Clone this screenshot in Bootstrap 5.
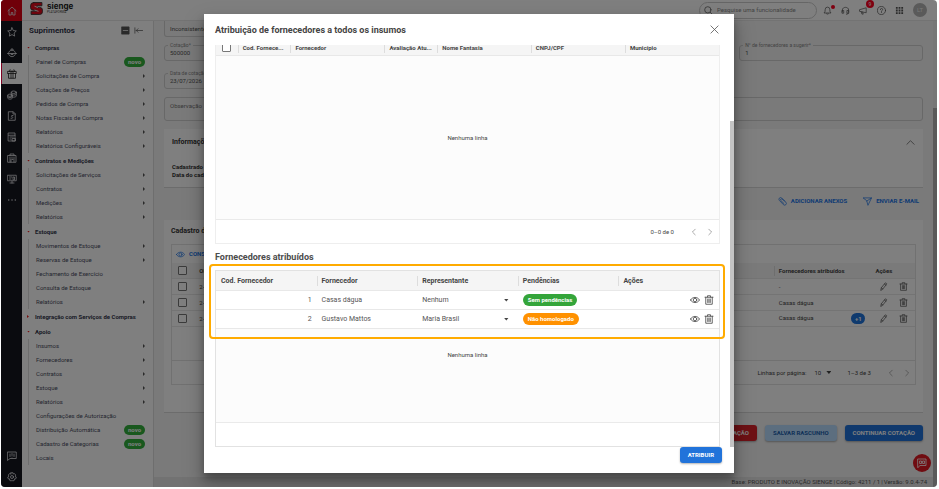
<!DOCTYPE html>
<html lang="pt-BR">
<head>
<meta charset="utf-8">
<meta name="viewport" content="width=device-width, initial-scale=1">
<title>Sienge - Suprimentos</title>
<link href="https://cdn.jsdelivr.net/npm/bootstrap@5.3.0/dist/css/bootstrap.min.css" rel="stylesheet">
<style>
html,body{height:100%}
body{font-family:Roboto,"Liberation Sans",sans-serif;font-size:6px;line-height:10px;color:#333;background:#fff;padding:0 2px 2px 1px;overflow:hidden}
a{color:inherit;text-decoration:none}
svg{display:block;fill:none;stroke:currentColor;stroke-width:1.6;stroke-linecap:round;stroke-linejoin:round;flex:none}
button{font:inherit}
input,select{font:inherit;color:inherit}
.app-frame{border-radius:4px;background:#f4f4f4}
.rail{width:21px;background:#14161f;color:#e4e4e8}
.rail a{height:21px}
.rail svg{width:10px;height:10px}
.rail .rail-home{background:#e00012}
.rail .rail-on{background:#fff;color:#222;border-left:1px solid #f04}
.topbar{height:21px;background:#fff;border-bottom:1px solid #e6e6e6;padding:0 10px 0 8px}
.logo-name{font:bold 8px/8px Inter,"Open Sans",sans-serif;color:#222}
.logo-sub{font-size:3px;line-height:4px;color:#444}
.search-pill{width:118px;height:17px;border:1px solid #ccc;border-radius:9px;color:#555;padding:0 4px;margin-right:6px}
.search-pill input{border:0;background:none;outline:0;padding:0;min-width:0}
.search-pill input::placeholder{color:#888;opacity:1}
.top-icons{gap:7px;color:#555}
.top-icons svg{width:11px;height:11px}
.top-icons button{color:inherit;width:11px}
.dot{top:-1px;right:-1px;width:4px;height:4px;background:#ff0020}
.count{top:-6px;right:-4px;width:8px;height:8px;font-size:5px;line-height:8px;background:#ff0020;color:#fff}
.avatar{width:14px;height:14px;background:#b4b4b4;color:#eee;line-height:14px}
.side{width:132px;background:#fff;border-right:1px solid #ddd;color:#4a4d62}
.side-head{height:19px;padding:0 10px 0 7px;font-size:8px;font-weight:700;color:#34374c}
.side-head svg{width:8px;height:8px}
.side-group{height:15px;padding-left:5px;font-weight:700;gap:5px;color:#34374c}
.caret-d{width:3px;height:2px;background:#f02020;clip-path:polygon(0 0,100% 0,50% 100%)}
.caret-r{width:2px;height:3px;margin-right:1px;background:#f02020;clip-path:polygon(0 0,100% 50%,0 100%)}
.side-list{margin-left:6px;border-left:1px solid #ddd}
.side-list a{height:14px;padding:0 8px 0 7px}
.side-list .more::after{content:"";width:2px;height:4px;background:#555;clip-path:polygon(0 0,100% 50%,0 100%)}
.novo{background:#32b03c;color:#fff;font-weight:700;line-height:10px;width:21px}
.work{padding:0 10px}
.fld{height:16px;border:1px solid #d0d0d0;border-radius:3px}
.fld label{top:-4px;left:3px;padding:0 2px;background:#f4f4f4;font-size:5px;line-height:7px;color:#888}
.fld input{border:0;background:none;outline:0;padding:0 5px;color:#555}
.fld-grid{display:grid;grid-template-columns:repeat(4,1fr);column-gap:8px}
.obs{height:24px;border:1px solid #d0d0d0;border-radius:3px;background:none;padding:3px 5px;resize:none}
.obs::placeholder{color:#777;opacity:1}
.panel{background:#fff;border-bottom:1px solid #d8d8d8;color:#333}
.panel-two{margin-top:14px;padding:6px 7px 27px}
.panel-t{font-size:7px;font-weight:700;line-height:10px}
.meta{line-height:8px;font-weight:700}
.act-link{color:#2176e8;font-weight:700;border:0;background:none;padding:0;gap:4px}
.act-link svg{width:9px;height:9px}
.grid-box{border:1px solid #e2e2e2}
.tb{margin:0;table-layout:fixed;width:100%;border-collapse:separate;border-spacing:0}
.tb th,.tb td{padding:0 5px;white-space:nowrap;overflow:hidden;vertical-align:middle;border-bottom:1px solid #e8e8e8}
.tb th{background:#f5f5f5;font-weight:700;color:#444}
.sep{border-left:1px solid #ddd;padding-left:4px;margin-left:-5px;display:block}
input.tick{appearance:none;width:9px;height:9px;border:1px solid #777;border-radius:1px;margin:0 0 0 1px;display:block;background:#fff}
.tb-back th,.tb-back td{height:16px}
.tb-back td{color:#444}
.tb-back .acts{padding-right:7px}
.tb-back .acts svg{width:9px;height:9px}
.acts-gap{gap:11px}
.icon-b{border:0;background:none;padding:0;color:#555}
.icon-b svg{width:9px;height:9px}
.plus{background:#1f74dc;color:#fff;width:14px;line-height:11px;font-weight:700}
.page-sel{appearance:none;border:0;background:none;padding:0;width:8px}
.tri{width:5px;height:3px;background:#444;clip-path:polygon(0 0,100% 0,50% 100%);flex:none;pointer-events:none}
.page-nav{margin-top:33px;height:24px;border-top:1px solid #e2e2e2;color:#444}
.btn-x{font-weight:700;line-height:10px;padding:3px 8px;border-radius:3px;border:0;box-shadow:0 1px 2px rgba(0,0,0,.3)}
.btn-blue{background:#2173da;color:#fff}
.btn-red{background:#dc222b;color:#fff}
.btn-soft{background:#b8dcff;color:#1b5fae}
.btn-line{margin-top:12px}
.statusbar{height:10px;background:#e4e4e4;padding:0 6px;color:#555;gap:1px}
.fab{right:6px;bottom:15px;width:18px;height:18px;background:#e01822;color:#fff}
.page-scroll{width:4px;background:#eee}
.page-scroll div{background:#b4b4b4;margin-top:87px}
.shade{background:rgba(0,0,0,.5)}
.dlg{width:calc(100% - 28px);max-width:530px;top:14px;bottom:14px;background:#fff;box-shadow:0 5px 7px rgba(0,0,0,.25),0 10px 18px 2px rgba(0,0,0,.25)}
.dlg svg{stroke-width:1.8}
.dlg-head{height:31px;padding:0 15px 0 11px}
.dlg-title{font-size:9px;line-height:12px;font-weight:700;color:#444;margin:0}
.dlg-body{padding:0 14px 0 11px}
.first-grid{margin-top:-6px;border:1px solid #eee}
.tb-one th{height:16px;padding:0 0 0 5px}
.tb-two{font-size:7px}
.tb-two th{height:20px}.tb-two td{height:19px;color:#555}
.tb-two svg{width:10px;height:10px}
.empty{background:#fcfcfc;border-bottom:1px solid #eaeaea;color:#444}
.empty-a{height:164px}.empty-b{flex:1;padding-top:21px}
.foot-row{height:23px;color:#444;padding-right:5px}
.foot-row svg,.page-nav svg{width:8px;height:8px;color:#888}
.sub-title{font-size:9px;line-height:12px;font-weight:700;color:#4c4c4c;margin:7px 0}
.rep{appearance:none;border:0;background:none;padding:0;outline:0}
.tag{display:inline-block;font-size:6px;color:#fff;font-weight:700;line-height:12px;padding:0 5px;border-radius:6px}
.tag-ok{background:#34a53a}.tag-warn{background:#ff9100}
.marker{left:-7px;right:-6px;top:-7px;bottom:-10px;border:2px solid #ffab00;border-radius:4px;pointer-events:none}
.dlg-scroll{right:0;top:76px;bottom:0;width:4px;background:#c4c4c4}
.dlg-foot{height:26px;padding:0 12px 0 0}
</style>
<script src="https://cdn.jsdelivr.net/npm/bootstrap@5.3.0/dist/js/bootstrap.bundle.min.js"></script>
</head>
<body>
<svg width="0" height="0" class="position-absolute">
<defs>
<symbol id="i-pen" viewBox="0 0 20 20"><path d="M4 18l1-5L13.500 2.500q1-1 2.500 0t.8 2.500L8.500 15.500zM12 4.500l3.500 2.500M5 13l3.500 2.500"/></symbol>
<symbol id="i-bin" viewBox="0 0 20 20"><path d="M2 4.500h16M7 4V1.500h6V4M3.500 4.500v14h13v-14M7.500 8v7M10 8v7M12.500 8v7"/></symbol>
<symbol id="i-eye" viewBox="0 0 20 20"><path d="M1 10c4-7 14-7 18 0-4 7-14 7-18 0z"/><circle cx="10" cy="10" r="3.500"/></symbol>
<symbol id="i-prev" viewBox="0 0 20 20"><path d="M13 3l-7 7 7 7"/></symbol>
<symbol id="i-next" viewBox="0 0 20 20"><path d="M7 3l7 7-7 7"/></symbol>
</defs>
</svg>
<div class="app-frame position-relative overflow-hidden d-flex h-100">
  <nav class="rail d-flex flex-column flex-shrink-0" aria-label="Módulos">
    <a href="#" class="rail-home d-flex align-items-center justify-content-center" aria-label="Início"><svg viewBox="0 0 20 20"><path d="M2 9.500L10 2l8 7.500M4 8v10h4.500v-5h3v5H16V8"/></svg></a>
    <a href="#" class="d-flex align-items-center justify-content-center" aria-label="Favoritos"><svg viewBox="0 0 20 20"><path d="M10 1.500l2.600 5.600 6 .8-4.400 4.200 1.100 6.100L10 15.200l-5.300 3 1.100-6.100L1.400 7.900l6-.8z"/></svg></a>
    <a href="#" class="d-flex align-items-center justify-content-center" aria-label="Engenharia"><svg viewBox="0 0 20 20"><path d="M1 11h18M3 11c0-9 14-9 14 0M3.500 13c2 6 11 6 13 0M8 4V2h4v2M8 11v2h4v-2"/></svg></a>
    <a href="#" class="rail-on d-flex align-items-center justify-content-center" aria-label="Suprimentos"><svg viewBox="0 0 20 20"><path d="M1.500 5h17v4h-17zM3 9v9.500h14V9M8 5v13M12 5v13M10 5C7 0 3 1 5 5M10 5c3-5 7-4 5 0"/></svg></a>
    <a href="#" class="d-flex align-items-center justify-content-center" aria-label="Financeiro"><svg viewBox="0 0 20 20"><ellipse cx="13.500" cy="4.500" rx="5" ry="2.500"/><path d="M8.500 4.500v8c2 2.500 8 2.500 10 0v-8M8.500 8.500c2 2.500 8 2.500 10 0"/><ellipse cx="6" cy="10.500" rx="4.500" ry="2.300"/><path d="M1.500 10.500v6c2 2.500 7 2.500 9 0v-6M1.500 13.500c2 2.500 7 2.500 9 0"/></svg></a>
    <a href="#" class="d-flex align-items-center justify-content-center" aria-label="Contabilidade"><svg viewBox="0 0 20 20"><path d="M3.500 1.500h9l4 4v13h-13zM12 2v4h4M12 9H9.500q-2 1.500 0 2.500h1q2 1 0 3H8"/></svg></a>
    <a href="#" class="d-flex align-items-center justify-content-center" aria-label="Fiscal"><svg viewBox="0 0 20 20"><path d="M3 2h13v16H3zM3 6.500h13M6 10h7M6 14h2M11 13h6v5h-6z"/></svg></a>
    <a href="#" class="d-flex align-items-center justify-content-center" aria-label="Patrimônio"><svg viewBox="0 0 20 20"><path d="M2 5h16v13.500H2zM6 5V2h8v3M6 8v10M14 8v10M10 8v3l-2 2v5M10 13h2"/></svg></a>
    <a href="#" class="d-flex align-items-center justify-content-center" aria-label="Comercial"><svg viewBox="0 0 20 20"><path d="M1.500 2.500h17v11h-17zM6 18h8M10 14v4M5 6h5M5 10h3M12 11V6h3v5z"/></svg></a>
    <a href="#" class="d-flex align-items-center justify-content-center" aria-label="Mais"><svg viewBox="0 0 20 20"><path d="M3.500 10h.1M10 10h.1M16.500 10h.1" stroke-width="2.600"/></svg></a>
    <a href="#" class="mt-auto d-flex align-items-center justify-content-center" aria-label="Comentários"><svg viewBox="0 0 20 20"><path d="M1.500 2h17v13H6l-4.500 3.500zM10 5v4M10 12v.1M6 6v5M14 6v5"/></svg></a>
    <a href="#" class="d-flex align-items-center justify-content-center" aria-label="Configurações"><svg viewBox="0 0 20 20"><circle cx="10" cy="10" r="3"/><path d="M8 1.500h4l.6 2.500 2.400-.8 2.500 3-1.500 2 2.500 1.800-1 3.600-2.600.2v2.600l-3.400 1.700L10 16.500l-1.500 1.600L5.100 16.400v-2.600l-2.600-.2-1-3.600L4 8.200 2.500 6.200l2.500-3 2.400.8z"/></svg></a>
  </nav>
  <div class="flex-fill d-flex flex-column overflow-hidden">
    <header class="topbar d-flex align-items-center flex-shrink-0">
      <a href="#" class="d-flex align-items-center me-auto pb-1" aria-label="sienge">
        <svg width="13" height="13" viewBox="0 0 24 24" fill="#e00a1c" stroke="none"><path fill="#e00a1c" d="M7 1h15v6h-9v3h5q5 0 5 5v3q0 5-5 5H2v-6h10v-2H6q-5 0-5-5V7q0-6 6-6z"/><path stroke="#fff" stroke-width="1.500" d="M9 8l5 2M9 15l6 2"/></svg>
        <span class="ps-1 ms-n1"><span class="logo-name d-block">sienge</span><span class="logo-sub d-block">PLATAFORMA</span></span>
      </a>
      <div class="search-pill d-flex align-items-center gap-1">
        <svg width="9" height="9" viewBox="0 0 20 20"><circle cx="8.500" cy="8.500" r="7"/><path d="M14 14l5 5"/></svg>
        <input class="flex-fill" type="search" aria-label="Pesquisar" placeholder="Pesquise uma funcionalidade">
      </div>
      <div class="top-icons d-flex align-items-center">
        <button class="icon-b position-relative" aria-label="Notificações"><svg viewBox="0 0 20 20"><path d="M3 15q2-1.500 2-7.500 0-5 5-5t5 5q0 6 2 7.500zM8 17.500q2 1.500 4 0"/></svg><span class="dot position-absolute rounded-circle"></span></button>
        <button class="icon-b" aria-label="Suporte"><svg viewBox="0 0 20 20"><path d="M3 13V9c0-8 14-8 14 0v4M3 10h3v6H3zM14 10h3v6h-3zM17 16q-1 2.500-5 2.500"/></svg></button>
        <button class="icon-b position-relative" aria-label="Novidades"><svg viewBox="0 0 20 20"><path d="M2 8l14-4v11L2 12zM5 13l1.500 5h3L8 13.500"/></svg><span class="count position-absolute rounded-circle text-center">9</span></button>
        <button class="icon-b" aria-label="Ajuda"><svg viewBox="0 0 20 20"><circle cx="10" cy="10" r="9"/><path d="M7.500 8q0-2.500 2.500-2.500T12.500 8q0 1.500-2.500 3v1M10 14.500v.2"/></svg></button>
        <button class="icon-b" aria-label="Aplicativos"><svg viewBox="0 0 20 20"><path stroke="none" fill="currentColor" d="M2 2h4v4H2zM8 2h4v4H8zM14 2h4v4h-4zM2 8h4v4H2zM8 8h4v4H8zM14 8h4v4h-4zM2 14h4v4H2zM8 14h4v4H8zM14 14h4v4h-4z"/></svg></button>
        <span class="avatar rounded-circle text-center">LT</span>
      </div>
    </header>
    <div class="flex-fill d-flex overflow-hidden">
      <aside class="side flex-shrink-0">
        <div class="side-head d-flex align-items-center"><span class="me-auto">Suprimentos</span>
          <button class="icon-b me-1" aria-label="Recolher grupos"><svg viewBox="0 0 20 20"><path fill="#555" stroke="#555" d="M2 2h16v16H2z"/><path stroke="#fff" d="M5 10h10"/></svg></button>
          <button class="icon-b" aria-label="Ocultar menu"><svg viewBox="0 0 20 20"><path d="M2 4v12M19 10H5M9 6l-4 4 4 4"/></svg></button></div>
        <a href="#" class="side-group d-flex align-items-center"><i class="caret-d"></i>Compras</a>
        <div class="side-list">
          <a href="#" class="d-flex align-items-center justify-content-between">Painel de Compras<span class="novo rounded-pill text-center">novo</span></a>
          <a href="#" class="more d-flex align-items-center justify-content-between">Solicitações de Compra</a>
          <a href="#" class="more d-flex align-items-center justify-content-between">Cotações de Preços</a>
          <a href="#" class="more d-flex align-items-center justify-content-between">Pedidos de Compra</a>
          <a href="#" class="more d-flex align-items-center justify-content-between">Notas Fiscais de Compra</a>
          <a href="#" class="more d-flex align-items-center justify-content-between">Relatórios</a>
          <a href="#" class="more d-flex align-items-center justify-content-between">Relatórios Configuráveis</a>
        </div>
        <a href="#" class="side-group d-flex align-items-center"><i class="caret-d"></i>Contratos e Medições</a>
        <div class="side-list">
          <a href="#" class="more d-flex align-items-center justify-content-between">Solicitações de Serviços</a>
          <a href="#" class="more d-flex align-items-center justify-content-between">Contratos</a>
          <a href="#" class="more d-flex align-items-center justify-content-between">Medições</a>
          <a href="#" class="more d-flex align-items-center justify-content-between">Relatórios</a>
        </div>
        <a href="#" class="side-group d-flex align-items-center"><i class="caret-d"></i>Estoque</a>
        <div class="side-list">
          <a href="#" class="more d-flex align-items-center justify-content-between">Movimentos de Estoque</a>
          <a href="#" class="more d-flex align-items-center justify-content-between">Reservas de Estoque</a>
          <a href="#" class="d-flex align-items-center">Fechamento de Exercício</a>
          <a href="#" class="d-flex align-items-center">Consulta de Estoque</a>
          <a href="#" class="more d-flex align-items-center justify-content-between">Relatórios</a>
        </div>
        <a href="#" class="side-group d-flex align-items-center"><i class="caret-r"></i>Integração com Serviços de Compras</a>
        <a href="#" class="side-group d-flex align-items-center"><i class="caret-d"></i>Apoio</a>
        <div class="side-list">
          <a href="#" class="more d-flex align-items-center justify-content-between">Insumos</a>
          <a href="#" class="more d-flex align-items-center justify-content-between">Fornecedores</a>
          <a href="#" class="more d-flex align-items-center justify-content-between">Contratos</a>
          <a href="#" class="more d-flex align-items-center justify-content-between">Estoque</a>
          <a href="#" class="more d-flex align-items-center justify-content-between">Relatórios</a>
          <a href="#" class="d-flex align-items-center">Configurações de Autorização</a>
          <a href="#" class="d-flex align-items-center justify-content-between">Distribuição Automática<span class="novo rounded-pill text-center">novo</span></a>
          <a href="#" class="d-flex align-items-center justify-content-between">Cadastro de Categorias<span class="novo rounded-pill text-center">novo</span></a>
          <a href="#" class="d-flex align-items-center">Locais</a>
        </div>
      </aside>
      <main class="flex-fill d-flex flex-column overflow-hidden">
        <div class="work flex-fill">
          <div class="fld-grid"><div class="fld border-top-0 rounded-top-0 d-flex"><input class="w-100" aria-label="Situação da cotação" value="Inconsistente"></div></div>
          <div class="fld-grid pt-2">
            <div class="fld position-relative d-flex"><label class="position-absolute" for="cot">Cotação*</label><input id="cot" class="w-100" value="500000"></div>
            <span></span><span></span>
            <div class="fld position-relative d-flex"><label class="position-absolute" for="sug">N° de fornecedores a sugerir*</label><input id="sug" class="w-100" value="1"></div>
          </div>
          <div class="fld-grid pt-2 mt-1">
            <div class="fld position-relative d-flex"><label class="position-absolute" for="dat">Data de cotação*</label><input id="dat" class="w-100" value="23/07/2026"></div>
          </div>
          <textarea class="obs d-block w-100 mt-2" aria-label="Observação" placeholder="Observação"></textarea>
          <section class="panel px-2 pt-2 pb-2 mt-2">
            <div class="panel-t d-flex justify-content-between">Informações de cadastro<button class="icon-b" aria-label="Recolher"><svg viewBox="0 0 20 20"><path d="M2 14l8-8 8 8"/></svg></button></div>
            <div class="meta pt-3">Cadastrado por</div><div class="meta">Data do cadastro</div>
          </section>
          <div class="d-flex justify-content-end gap-3 mt-2 pe-1">
            <button class="act-link d-flex align-items-center"><svg viewBox="0 0 20 20"><path d="M15 9L8 2q-3-2-5 .5t0 5L12 17q3 2.500 5.500 0t0-5.500L9 4.500q-2-1-3 .3t0 2.700l7 7"/></svg>ADICIONAR ANEXOS</button>
            <button class="act-link d-flex align-items-center"><svg viewBox="0 0 20 20"><path d="M1 2h18L11 18.500 8.500 9zM8.500 9L19 2"/></svg>ENVIAR E-MAIL</button>
          </div>
          <section class="panel panel-two">
            <div class="panel-t pb-2">Cadastro de insumos</div>
            <div class="grid-box">
              <div class="d-flex align-items-center px-1 py-1"><button class="act-link d-flex align-items-center"><svg viewBox="0 0 20 20"><use href="#i-eye"/></svg>CONSULTAR</button></div>
              <table class="tb tb-back">
                <colgroup><col style="width:3%"><col style="width:78%"><col style="width:13%"><col style="width:6%"></colgroup>
                <thead><tr><th><input type="checkbox" class="tick" aria-label="Selecionar todos"></th><th>Obra</th><th><span class="sep">Fornecedores atribuídos</span></th><th>Ações</th></tr></thead>
                <tbody>
                <tr><td><input type="checkbox" class="tick" aria-label="Linha 1"></td><td>2-1</td><td>-</td><td class="acts"><div class="acts-gap d-flex justify-content-end"><button class="icon-b" aria-label="Editar"><svg><use href="#i-pen"/></svg></button><button class="icon-b" aria-label="Excluir"><svg><use href="#i-bin"/></svg></button></div></td></tr>
                <tr><td><input type="checkbox" class="tick" aria-label="Linha 2"></td><td>2-2</td><td>Casas dágua</td><td class="acts"><div class="acts-gap d-flex justify-content-end"><button class="icon-b" aria-label="Editar"><svg><use href="#i-pen"/></svg></button><button class="icon-b" aria-label="Excluir"><svg><use href="#i-bin"/></svg></button></div></td></tr>
                <tr><td><input type="checkbox" class="tick" aria-label="Linha 3"></td><td>2-3</td><td><div class="d-flex justify-content-between">Casas dágua<span class="plus rounded-pill text-center">+1</span></div></td><td class="acts"><div class="acts-gap d-flex justify-content-end"><button class="icon-b" aria-label="Editar"><svg><use href="#i-pen"/></svg></button><button class="icon-b" aria-label="Excluir"><svg><use href="#i-bin"/></svg></button></div></td></tr>
                </tbody>
              </table>
              <div class="page-nav d-flex align-items-center justify-content-end pe-1">
                <label for="pp" class="me-2">Linhas por página:</label><select id="pp" class="page-sel"><option>10</option></select><i class="tri ms-1 me-3"></i><span class="me-3">1–3 de 3</span><button class="icon-b me-2" aria-label="Anterior"><svg><use href="#i-prev"/></svg></button><button class="icon-b" aria-label="Próxima"><svg><use href="#i-next"/></svg></button>
              </div>
            </div>
          </section>
          <div class="btn-line d-flex justify-content-end gap-2">
            <button class="btn-x btn-red">CANCELAR COTAÇÃO</button><button class="btn-x btn-soft">SALVAR RASCUNHO</button><button class="btn-x btn-blue">CONTINUAR COTAÇÃO</button>
          </div>
        </div>
        <footer class="statusbar d-flex align-items-center justify-content-end"><span>Base: PRODUTO E INOVAÇÃO SIENGE</span><span>|</span><span>Código: 4211 / 1</span><span>|</span><span>Versão: 9.0.4-74</span></footer>
      </main>
      <div class="page-scroll d-flex flex-shrink-0"><div class="w-100"></div></div>
    </div>
  </div>
  <button class="fab position-absolute rounded-circle border-0 p-0 d-flex align-items-center justify-content-center" aria-label="Chat"><svg width="10" height="10" viewBox="0 0 20 20"><path d="M2 2h16v13H6l-4 4zM6 6h3v5H6zM12 6h3v5h-3z"/></svg></button>
  <div class="shade position-absolute top-0 start-0 w-100 h-100"></div>
  <div class="dlg position-absolute start-50 translate-middle-x d-flex flex-column" role="dialog" aria-labelledby="dt">
    <div class="dlg-head d-flex align-items-center justify-content-between"><h1 id="dt" class="dlg-title">Atribuição de fornecedores a todos os insumos</h1><button class="icon-b" aria-label="Fechar"><svg viewBox="0 0 20 20"><path d="M2 2l16 16M18 2L2 18"/></svg></button></div>
    <div class="dlg-body flex-fill position-relative overflow-hidden d-flex flex-column">
      <div class="first-grid">
        <table class="tb tb-one">
          <colgroup><col style="width:4.300%"><col style="width:10.500%"><col style="width:18.700%"><col style="width:10.500%"><col style="width:18.600%"><col style="width:18.700%"><col style="width:18.700%"></colgroup>
          <thead><tr><th><input type="checkbox" class="tick" aria-label="Selecionar todos"></th><th><span class="sep">Cod. Fornece...</span></th><th><span class="sep">Fornecedor</span></th><th><span class="sep">Avaliação Atu...</span></th><th><span class="sep">Nome Fantasia</span></th><th><span class="sep">CNPJ/CPF</span></th><th><span class="sep">Município</span></th></tr></thead>
        </table>
        <div class="empty empty-a d-flex align-items-center justify-content-center">Nenhuma linha</div>
        <div class="foot-row d-flex align-items-center justify-content-end"><span class="me-3">0–0 de 0</span><button class="icon-b me-2" aria-label="Anterior"><svg><use href="#i-prev"/></svg></button><button class="icon-b" aria-label="Próxima"><svg><use href="#i-next"/></svg></button></div>
      </div>
      <h2 class="sub-title">Fornecedores atribuídos</h2>
      <div class="grid-box d-flex flex-column flex-fill">
        <div class="position-relative">
          <table class="tb tb-two">
            <colgroup><col span="5" style="width:20%"></colgroup>
            <thead><tr><th>Cod. Fornecedor</th><th><span class="sep">Fornecedor</span></th><th><span class="sep">Representante</span></th><th><span class="sep">Pendências</span></th><th><span class="sep">Ações</span></th></tr></thead>
            <tbody>
            <tr><td class="text-end">1</td><td>Casas dágua</td><td><div class="d-flex align-items-center"><select class="rep flex-fill" aria-label="Representante 1"><option>Nenhum</option></select><i class="tri me-1"></i></div></td><td><span class="tag tag-ok">Sem pendências</span></td><td><div class="d-flex justify-content-end gap-1"><button class="icon-b" aria-label="Ver"><svg><use href="#i-eye"/></svg></button><button class="icon-b" aria-label="Excluir"><svg><use href="#i-bin"/></svg></button></div></td></tr>
            <tr><td class="text-end">2</td><td>Gustavo Mattos</td><td><div class="d-flex align-items-center"><select class="rep flex-fill" aria-label="Representante 2"><option>Maria Brasil</option></select><i class="tri me-1"></i></div></td><td><span class="tag tag-warn">Não homologado</span></td><td><div class="d-flex justify-content-end gap-1"><button class="icon-b" aria-label="Ver"><svg><use href="#i-eye"/></svg></button><button class="icon-b" aria-label="Excluir"><svg><use href="#i-bin"/></svg></button></div></td></tr>
            </tbody>
          </table>
          <div class="marker position-absolute"></div>
        </div>
        <div class="empty empty-b text-center">Nenhuma linha</div>
        <div class="foot-row"></div>
      </div>
      <div class="dlg-scroll position-absolute"></div>
    </div>
    <div class="dlg-foot d-flex align-items-start justify-content-end"><button class="btn-x btn-blue">ATRIBUIR</button></div>
  </div>
</div>
</body>
</html>
